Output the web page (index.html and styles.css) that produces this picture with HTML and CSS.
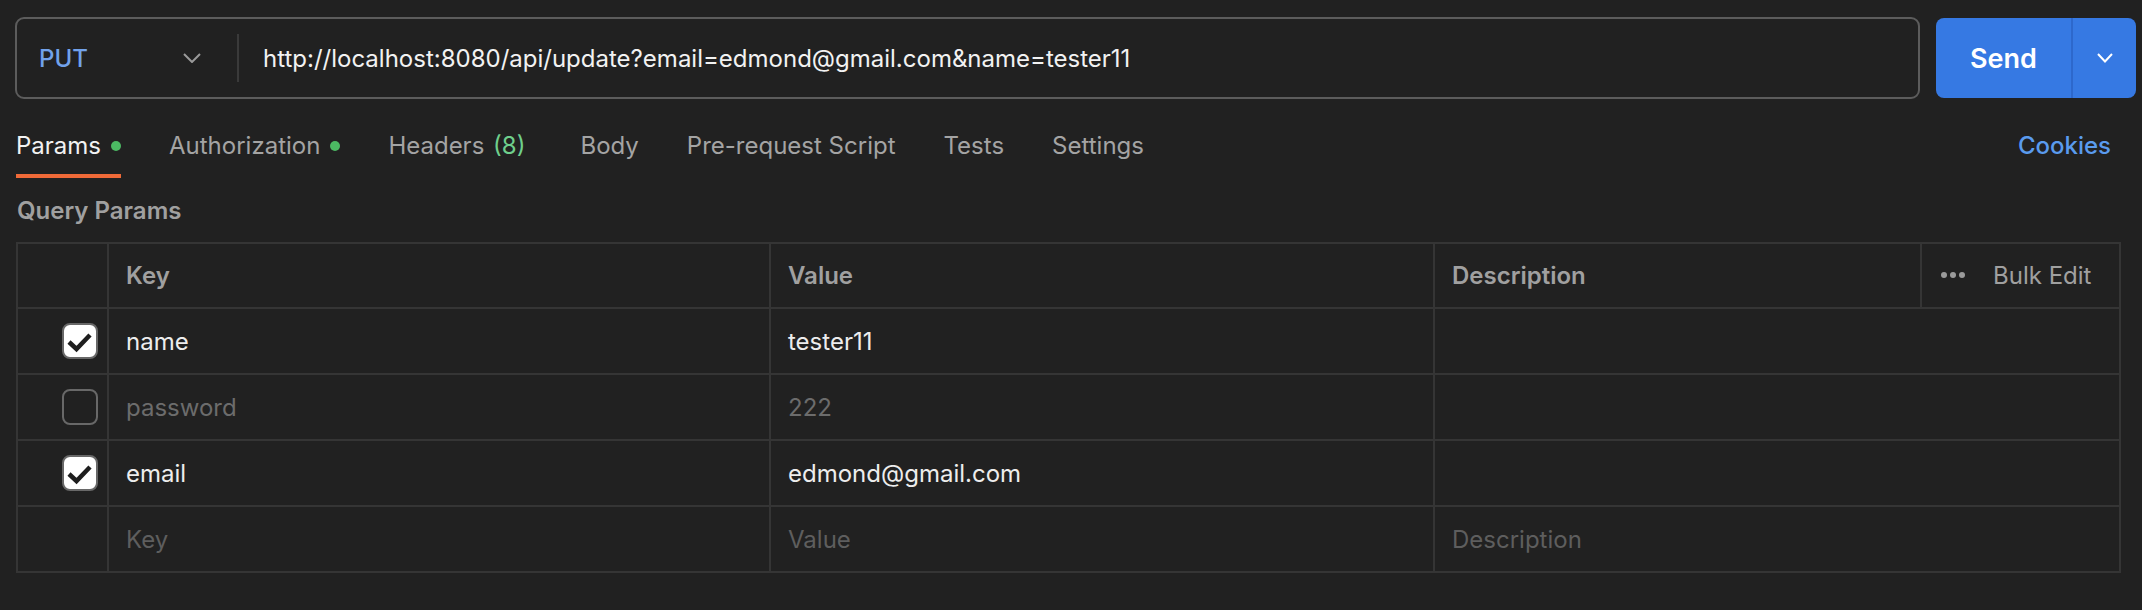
FILE: index.html
```html
<!DOCTYPE html>
<html lang="en">
<head>
<meta charset="utf-8">
<title>Postman request</title>
<link rel="stylesheet" href="styles.css">
</head>
<body>
<div class="request-bar">
  <div class="url-box">
    <div class="method">
      <span class="method-name">PUT</span>
      <svg class="chev" width="18" height="10" viewBox="0 0 18 10"><polyline points="1,1 9,9 17,1" fill="none" stroke="#9a9a9a" stroke-width="2"/></svg>
    </div>
    <div class="divider"></div>
    <div class="url">http://localhost:8080/api/update?email=edmond@gmail.com&amp;name=tester11</div>
  </div>
  <div class="send">
    <span class="send-label">Send</span>
    <span class="send-arrow"><svg width="16" height="10" viewBox="0 0 16 10"><polyline points="1,1 8,8.5 15,1" fill="none" stroke="#ffffff" stroke-width="2"/></svg></span>
  </div>
</div>

<div class="tabs">
  <div class="tab active">Params<span class="dot"></span></div>
  <div class="tab">Authorization<span class="dot"></span></div>
  <div class="tab tab-headers">Headers&nbsp;<span class="count">(8)</span></div>
  <div class="tab">Body</div>
  <div class="tab">Pre-request Script</div>
  <div class="tab">Tests</div>
  <div class="tab">Settings</div>
  <div class="cookies">Cookies</div>
</div>

<div class="section-label">Query Params</div>

<table class="params">
  <colgroup>
    <col class="c-check"><col class="c-key"><col class="c-value"><col class="c-desc"><col class="c-bulk">
  </colgroup>
  <thead>
    <tr>
      <th></th>
      <th>Key</th>
      <th>Value</th>
      <th>Description</th>
      <th class="bulk"><span class="dots"><i></i><i></i><i></i></span>Bulk Edit</th>
    </tr>
  </thead>
  <tbody>
    <tr>
      <td class="check"><span class="box on"><svg width="32" height="32" viewBox="0 0 32 32"><polyline points="5,17 12.5,24 26,10" fill="none" stroke="#1e1e1e" stroke-width="4.5"/></svg></span></td>
      <td>name</td>
      <td>tester11</td>
      <td colspan="2"></td>
    </tr>
    <tr class="disabled">
      <td class="check"><span class="box"></span></td>
      <td>password</td>
      <td>222</td>
      <td colspan="2"></td>
    </tr>
    <tr>
      <td class="check"><span class="box on"><svg width="32" height="32" viewBox="0 0 32 32"><polyline points="5,17 12.5,24 26,10" fill="none" stroke="#1e1e1e" stroke-width="4.5"/></svg></span></td>
      <td>email</td>
      <td>edmond@gmail.com</td>
      <td colspan="2"></td>
    </tr>
    <tr class="placeholder">
      <td></td>
      <td>Key</td>
      <td>Value</td>
      <td colspan="2">Description</td>
    </tr>
  </tbody>
</table>
</body>
</html>
```

FILE: styles.css
```css
html, body {
  margin: 0;
  padding: 0;
}
body {
  width: 2142px;
  height: 610px;
  overflow: hidden;
  background: #212121;
  color: #ededed;
  font-family: Inter, "Noto Sans", "Liberation Sans", sans-serif;
  font-size: 24px;
}

/* request bar */
.request-bar {
  display: flex;
  align-items: flex-start;
  gap: 16px;
  padding: 17px 6px 0 15px;
  height: 82px;
}
.url-box {
  flex: 1;
  height: 82px;
  box-sizing: border-box;
  border: 2px solid #5c5c5c;
  border-radius: 9px;
  display: flex;
  align-items: center;
}
.method {
  display: flex;
  align-items: center;
  justify-content: space-between;
  width: 162px;
  padding-left: 22px;
}
.method-name {
  color: #72a2ea;
  font-weight: 500;
}
.chev { display: block; }
.divider {
  width: 2px;
  height: 48px;
  margin-left: 36px;
  background: #3a3a3a;
}
.url {
  margin-left: 24px;
  color: #f2f2f2;
  white-space: nowrap;
}
.send {
  margin-top: 1px;
  width: 200px;
  height: 80px;
  display: flex;
  background: #3679e3;
  border-radius: 8px;
  color: #ffffff;
}
.send-label {
  width: 135px;
  display: flex;
  align-items: center;
  justify-content: center;
  font-size: 27px;
  font-weight: 600;
}
.send-arrow {
  flex: 1;
  display: flex;
  align-items: center;
  justify-content: center;
  border-left: 2px solid #2d68cc;
}
.send-arrow svg { display: block; }

/* tabs */
.tabs {
  display: flex;
  align-items: flex-start;
  margin-top: 32px;
  padding: 0 31px 0 16px;
}
.tab {
  display: flex;
  align-items: center;
  gap: 10px;
  line-height: 30px;
  padding-bottom: 13px;
  border-bottom: 4px solid transparent;
  color: #a4a4a4;
  margin-right: 48px;
  white-space: nowrap;
}
.tab.tab-headers {
  gap: 0;
  margin-right: 55px;
}
.tab.active {
  color: #f2f2f2;
  border-bottom-color: #f06a38;
}
.dot {
  width: 10px;
  height: 10px;
  border-radius: 50%;
  background: #4cb963;
}
.count {
  color: #6fcf8c;
  margin-left: 2px;
}
.cookies {
  margin-left: auto;
  line-height: 30px;
  color: #5a9bee;
  font-weight: 500;
}

/* section label */
.section-label {
  margin-top: 18px;
  padding-left: 17px;
  line-height: 30px;
  color: #a0a0a0;
  font-weight: 600;
}

/* table */
.params {
  margin: 16px 0 0 16px;
  width: 2103px;
  border-collapse: collapse;
  table-layout: fixed;
  border: 2px solid #353535;
}
.c-check { width: 91px; }
.c-key { width: 662px; }
.c-value { width: 664px; }
.c-desc { width: 487px; }
.c-bulk { width: 199px; }
.params tr { height: 66px; }
.params th, .params td {
  border: 2px solid #353535;
  height: 66px;
  padding: 0 0 0 17px;
  text-align: left;
  white-space: nowrap;
  box-sizing: border-box;
}
.params thead th { height: 65px; }
.params thead tr { height: 65px; }
.params th {
  color: #a0a0a0;
  font-weight: 600;
}
.params th.bulk {
  font-weight: 400;
  padding-left: 19px;
}
.dots {
  display: inline-flex;
  gap: 3px;
  margin-right: 28px;
  vertical-align: middle;
  position: relative;
  top: -2px;
}
.dots i {
  display: block;
  width: 6px;
  height: 6px;
  border-radius: 50%;
  background: #9a9a9a;
}
.params td { color: #ededed; }
.params td.check {
  padding: 0 9px 0 0;
  text-align: right;
}
.box {
  display: inline-flex;
  align-items: center;
  justify-content: center;
  width: 36px;
  height: 36px;
  box-sizing: border-box;
  border: 2px solid #686868;
  border-radius: 8px;
  vertical-align: middle;
}
.box.on { background: #ffffff; }
.box svg { display: block; }
.disabled td { color: #6c6c6c; }
.placeholder td { color: #5e5e5e; }
```
